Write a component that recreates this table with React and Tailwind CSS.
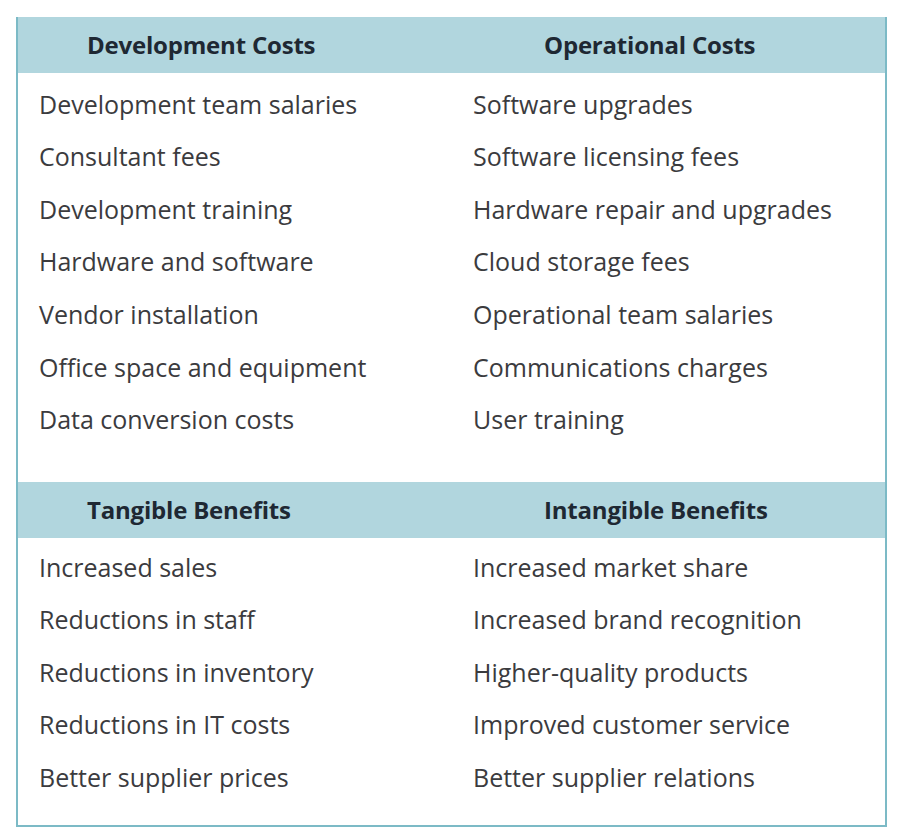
import React from 'react';

const sections = [
  {
    headings: ['Development Costs', 'Operational Costs'],
    rows: [
      ['Development team salaries', 'Software upgrades'],
      ['Consultant fees', 'Software licensing fees'],
      ['Development training', 'Hardware repair and upgrades'],
      ['Hardware and software', 'Cloud storage fees'],
      ['Vendor installation', 'Operational team salaries'],
      ['Office space and equipment', 'Communications charges'],
      ['Data conversion costs', 'User training'],
    ],
  },
  {
    headings: ['Tangible Benefits', 'Intangible Benefits'],
    rows: [
      ['Increased sales', 'Increased market share'],
      ['Reductions in staff', 'Increased brand recognition'],
      ['Reductions in inventory', 'Higher-quality products'],
      ['Reductions in IT costs', 'Improved customer service'],
      ['Better supplier prices', 'Better supplier relations'],
    ],
  },
];

function Section({ headings, rows, first }) {
  return (
    <div>
      <div className="grid grid-cols-[434px_1fr] h-[56px] items-center bg-[#b1d6de] text-[#1e2833] font-bold text-[24px] tracking-[-0.2px]">
        <div className="pl-[69px]">{headings[0]}</div>
        <div className="pl-[92px]">{headings[1]}</div>
      </div>
      <div className={first ? 'pt-[5px] pb-[36px]' : 'pt-[3px] pb-[21px]'}>
        {rows.map(([left, right]) => (
          <div key={left} className="grid grid-cols-[434px_1fr] h-[52.6px] items-center text-[#3b3b3e] text-[25px]">
            <div className="pl-[21px]">{left}</div>
            <div className="pl-[21px]">{right}</div>
          </div>
        ))}
      </div>
    </div>
  );
}

export default function App() {
  return (
    <div className="w-[904px] h-[839px] bg-white pt-[17px] pl-[16px] font-['Open_Sans',sans-serif]">
      <div className="w-[871px] border-2 border-t-0 border-[#7cbac6]">
        {sections.map((s, i) => (
          <Section key={s.headings[0]} {...s} first={i === 0} />
        ))}
      </div>
    </div>
  );
}
